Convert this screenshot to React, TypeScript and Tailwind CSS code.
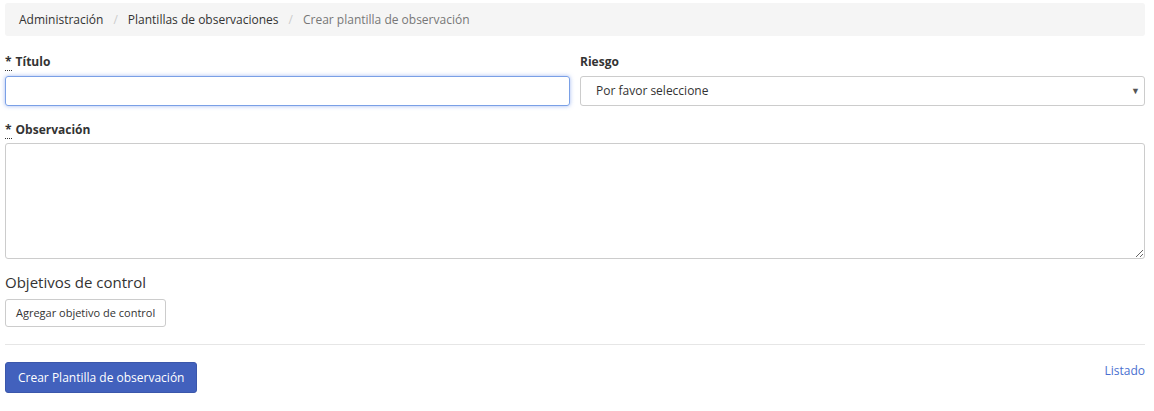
import React from 'react';

const Req = () => (
   <abbr title="requerido" className="no-underline border-b border-dotted border-[#333] mr-1 leading-none">*</abbr>
);

export default function App() {
   return (
      <div className="min-h-screen bg-white pl-[5px] pr-[9px] pt-[3px] text-[12px] text-[#333]" style={{ fontFamily: '"Open Sans", "Liberation Sans", sans-serif' }}>
         {/* breadcrumb */}
         <ol className="flex items-center h-[33px] px-[14px] bg-[#f5f5f5] rounded-[3px]">
            <li><a href="#" className="text-[#333]">Administración</a></li>
            <li className="px-[10px] text-[#ccc]">/</li>
            <li><a href="#" className="text-[#333]">Plantillas de observaciones</a></li>
            <li className="px-[10px] text-[#ccc]">/</li>
            <li className="text-[#777]">Crear plantilla de observación</li>
         </ol>

         <form className="mt-[17px]">
            <div className="grid grid-cols-2 gap-[10px]">
               <div>
                  <label className="block font-bold leading-[18px] mb-[5px]"><Req />Título</label>
                  <input
                     type="text"
                     className="block w-full h-[30px] px-3 border border-[#7aa0e6] rounded-[3px] outline-none shadow-[0_0_4px_rgba(102,140,233,0.6)]"
                  />
               </div>
               <div>
                  <label className="block font-bold leading-[18px] mb-[5px]">Riesgo</label>
                  <div className="relative">
                     <select className="block w-full h-[30px] pl-[15px] pr-8 border border-[#ccc] rounded-[3px] bg-white appearance-none text-[#333] outline-none">
                        <option>Por favor seleccione</option>
                     </select>
                     <span className="absolute right-[5px] top-[8px] text-[9px] text-[#555] pointer-events-none">▼</span>
                  </div>
               </div>
            </div>

            <div className="mt-[15px]">
               <label className="block font-bold leading-[18px] mb-[4px]"><Req />Observación</label>
               <textarea className="block w-full h-[116px] px-3 py-1 border border-[#ccc] rounded-[3px] outline-none resize-y"></textarea>
            </div>

            <h4 className="mt-[13px] text-[15px] leading-[20px] text-[#333]">Objetivos de control</h4>
            <button type="button" className="mt-[7px] h-[28px] px-[10px] text-[11px] text-[#333] bg-white border border-[#ccc] rounded-[3px]">
               Agregar objetivo de control
            </button>

            <hr className="mt-[17px] border-t border-[#e6e6e6]" />

            <div className="flex items-start justify-between mt-[17px]">
               <button type="button" className="h-[31px] px-[12px] text-white bg-[#4261bd] border border-[#3b57ab] rounded-[3px]">
                  Crear Plantilla de observación
               </button>
               <a href="#" className="text-[#4a6fd0]">Listado</a>
            </div>
         </form>
      </div>
   );
}
